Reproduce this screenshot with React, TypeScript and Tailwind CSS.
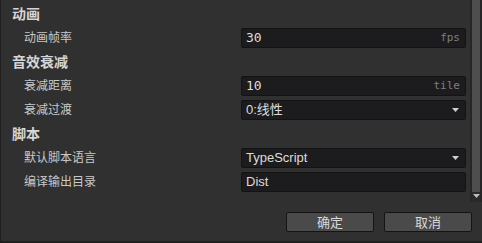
import { ReactNode } from "react";

const font = "font-['Liberation_Sans','Noto_Sans_CJK_SC',sans-serif]";
const mono = "font-['DejaVu_Sans_Mono',monospace]";

function Heading({ children }: { children: ReactNode }) {
  return (
    <div className="flex h-6 items-center pl-[11px] text-[14px] font-bold text-[#d6d6d6]">
      {children}
    </div>
  );
}

function Row({ label, children }: { label: string; children: ReactNode }) {
  return (
    <div className="flex h-6 items-center">
      <div className="w-[240px] pl-[23px] text-[12px] text-[#c9c9c9]">{label}</div>
      {children}
    </div>
  );
}

function NumberField({ value, unit }: { value: string; unit: string }) {
  return (
    <div className="flex h-5 w-[225px] items-center justify-between rounded-[2px] border border-[#131313] bg-[#1c1c1e] pl-[4px] pr-[5px]">
      <span className={`${mono} text-[13px] text-[#dcdcdc]`}>{value}</span>
      <span className={`${mono} text-[11px] text-[#7e7e7e]`}>{unit}</span>
    </div>
  );
}

function TextField({ value }: { value: string }) {
  return (
    <div className="flex h-5 w-[225px] items-center rounded-[2px] border border-[#131313] bg-[#1c1c1e] pl-[4px] text-[13px] text-[#dcdcdc]">
      {value}
    </div>
  );
}

function SelectField({ value }: { value: string }) {
  return (
    <div className="flex h-5 w-[225px] items-center justify-between rounded-[2px] border border-[#131313] bg-[#1c1c1e] pl-[4px] pr-[6px] text-[13px] text-[#dcdcdc]">
      <span>{value}</span>
      <svg width="7" height="4" viewBox="0 0 7 4">
        <path d="M0 0h7L3.5 4z" fill="#d0d0d0" />
      </svg>
    </div>
  );
}

export default function App() {
  return (
    <div className={`${font} flex h-[243px] w-[482px] flex-col border-b-2 border-l border-[#1f1f1f] bg-[#303030]`}>
      <div className="flex h-[202px]">
        <div className="flex-1 pt-[2px]">
          <Heading>动画</Heading>
          <Row label="动画帧率">
            <NumberField value="30" unit="fps" />
          </Row>
          <Heading>音效衰减</Heading>
          <Row label="衰减距离">
            <NumberField value="10" unit="tile" />
          </Row>
          <Row label="衰减过渡">
            <SelectField value="0:线性" />
          </Row>
          <Heading>脚本</Heading>
          <Row label="默认脚本语言">
            <SelectField value="TypeScript" />
          </Row>
          <Row label="编译输出目录">
            <TextField value="Dist" />
          </Row>
        </div>
        <div className="flex w-[12px] flex-col border-x-2 border-[#262626] bg-[#2a2a2a]">
          <div className="h-[192px] bg-[#4e4e4e]" />
          <div className="flex flex-1 items-start justify-center pt-[2px]">
            <svg width="7" height="4" viewBox="0 0 7 4">
              <path d="M0 0h7L3.5 4z" fill="#bdbdbd" />
            </svg>
          </div>
        </div>
      </div>
      <div className="flex justify-end gap-[10px] pr-[10px] pt-[10px]">
        <button className="h-5 w-[88px] rounded-[2px] border border-[#141414] bg-[#4a4a4a] text-[13px] text-[#dadada]">
          确定
        </button>
        <button className="h-5 w-[88px] rounded-[2px] border border-[#141414] bg-[#4a4a4a] text-[13px] text-[#dadada]">
          取消
        </button>
      </div>
    </div>
  );
}
